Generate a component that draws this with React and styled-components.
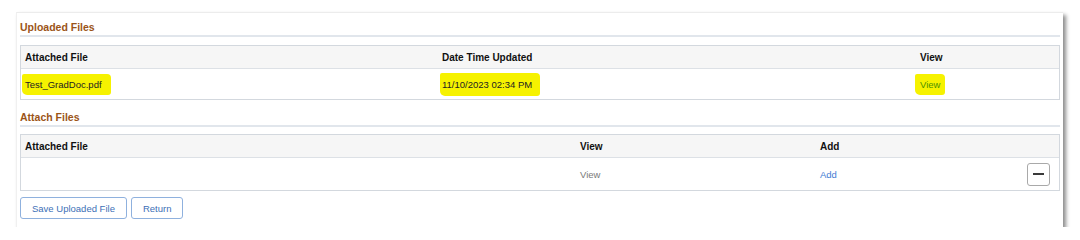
import React from "react"
import styled, { createGlobalStyle } from "styled-components"

const GlobalStyle = createGlobalStyle`
  *, *::before, *::after {
    box-sizing: border-box;
  }
  body {
    margin: 0;
    background: #fff;
    font-family: Arial, "Liberation Sans", sans-serif;
  }
`

const Panel = styled.div`
  margin: 12px 0 0 16px;
  width: 1047px;
  height: 215px;
  padding: 0 3px;
  background: #fff;
  border-top: 1px solid #ececec;
  border-left: 1px solid #f0f0f0;
  box-shadow: 3px 3px 4px rgba(0, 0, 0, 0.45);
`

const SectionTitle = styled.div`
  height: ${p => p.h}px;
  display: flex;
  align-items: flex-end;
  padding-bottom: 2px;
  font-size: 10.5px;
  font-weight: bold;
  color: #9b5418;
  border-bottom: 2px solid #e1e6ec;
`

const Table = styled.div`
  margin-top: ${p => p.gap}px;
  border: 1px solid #d3d8de;
`

const Row = styled.div`
  display: grid;
  grid-template-columns: ${p => p.cols};
  align-items: center;
  height: ${p => p.h}px;
  background: ${p => (p.head ? "#f6f6f6" : "#fff")};
  border-bottom: ${p => (p.head ? "1px solid #dde1e6" : "none")};
  font-size: ${p => (p.head ? 10 : 9.5)}px;
  font-weight: ${p => (p.head ? "bold" : "normal")};
  color: #111;
`

const Cell = styled.div`
  padding-left: 4px;
  color: ${p => p.color || "inherit"};
  display: flex;
  justify-content: ${p => (p.end ? "flex-end" : "flex-start")};
`

const Highlight = styled.span`
  background: #f6f200;
  padding: ${p => p.py}px ${p => p.pr}px ${p => p.py}px ${p => p.pl}px;
  margin-left: -${p => p.pl}px;
  border-radius: 2px 4px 3px 5px;
  color: ${p => p.color || "#222"};
`

const MinusButton = styled.button`
  width: 23px;
  height: 23px;
  margin-right: 9px;
  padding: 0;
  border: 1px solid #a9a9a9;
  border-radius: 3px;
  background: #fff;
  display: flex;
  align-items: center;
  justify-content: center;
  &::before {
    content: "";
    width: 11px;
    height: 2px;
    background: #3a3a3a;
  }
`

const ButtonBar = styled.div`
  display: flex;
  gap: 4px;
  margin-top: 6px;
`

const Button = styled.button`
  height: 22px;
  padding: 0 11px;
  border: 1px solid #8fb1de;
  border-radius: 3px;
  background: #fff;
  color: #3d6fb6;
  font-family: Arial, "Liberation Sans", sans-serif;
  font-size: 9.5px;
`

const uploadCols = "417px 478px 1fr"
const attachCols = "555px 240px 1fr auto"

const App = () => {
  return (
    <>
      <GlobalStyle />
      <Panel>
        <SectionTitle h={24}>Uploaded Files</SectionTitle>
        <Table gap={8}>
          <Row head h={23} cols={uploadCols}>
            <Cell>Attached File</Cell>
            <Cell>Date Time Updated</Cell>
            <Cell>View</Cell>
          </Row>
          <Row h={30} cols={uploadCols}>
            <Cell>
              <Highlight py={5} pl={3} pr={9}>Test_GradDoc.pdf</Highlight>
            </Cell>
            <Cell>
              <Highlight py={6} pl={2} pr={8}>11/10/2023 02:34 PM</Highlight>
            </Cell>
            <Cell>
              <Highlight py={5} pl={5} pr={5} color="#4f9300">View</Highlight>
            </Cell>
          </Row>
        </Table>
        <SectionTitle h={27}>Attach Files</SectionTitle>
        <Table gap={7}>
          <Row head h={23} cols={attachCols}>
            <Cell>Attached File</Cell>
            <Cell>View</Cell>
            <Cell>Add</Cell>
            <Cell />
          </Row>
          <Row h={32} cols={attachCols}>
            <Cell />
            <Cell color="#7a7a7a">View</Cell>
            <Cell color="#3f7bd3">Add</Cell>
            <Cell end>
              <MinusButton aria-label="Delete row" />
            </Cell>
          </Row>
        </Table>
        <ButtonBar>
          <Button>Save Uploaded File</Button>
          <Button>Return</Button>
        </ButtonBar>
      </Panel>
    </>
  )
}

export default App
